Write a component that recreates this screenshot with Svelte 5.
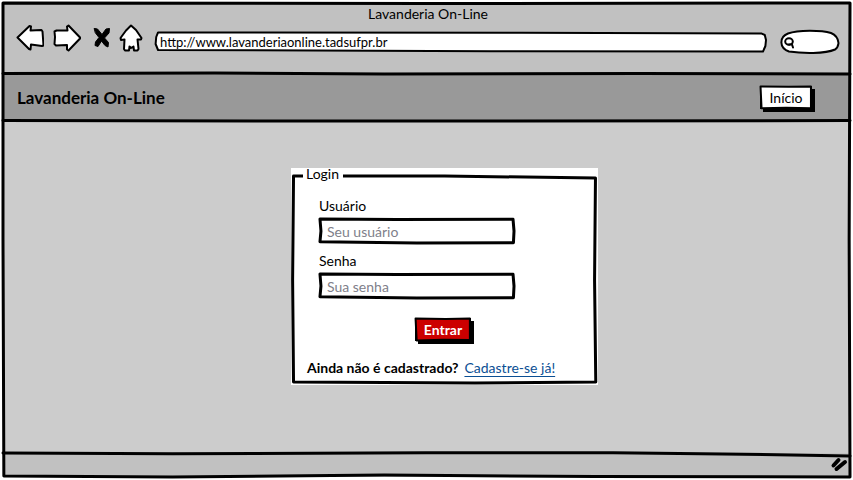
<script>
  let address = $state('http://www.lavanderiaonline.tadsufpr.br');
  let search = $state('');
  let user = $state('');
  let password = $state('');
</script>

{#snippet rough(d, fill = 'none')}
  <svg class="rough" viewBox="0 0 100 100" preserveAspectRatio="none" aria-hidden="true">
    <path {d} {fill} />
  </svg>
{/snippet}

<div class="window">
  <div class="toolbar">
    <div class="title">Lavanderia On-Line</div>
    <div class="controls">
      <button class="icon" aria-label="Voltar">
        <svg width="28" height="28" viewBox="0 0 28 28"><path d="M1.500 13.500 L13.500 2 L15 2.500 L14.500 6.500 L25.500 6 L26.500 7.500 L27.500 21.500 L26 22 L15 20.500 L14.500 25.500 L13 25 Z" /></svg>
      </button>
      <button class="icon forward" aria-label="Avançar">
        <svg width="28" height="28" viewBox="0 0 28 28"><path d="M1.500 7.500 L3.500 6.500 L14.500 6.500 L14 2.500 L15.500 1.500 L27.500 14 L15.500 26.500 L14 25.500 L14 21 L3 21.500 L1.500 20 L2 13 Z" /></svg>
      </button>
      <button class="icon stop" aria-label="Parar">
        <svg width="18" height="22" viewBox="0 0 18 22"><path class="solid" d="M1.500 1.500 L4.500 2 L9 7.500 L13 2 L16.500 1.500 L16 6 L11.500 11 L15.500 15.500 L15 20 L12 18.500 L8.500 14 L5 19.500 L2 18.500 L2.500 15 L6 10.500 L2.500 6 Z" /></svg>
      </button>
      <button class="icon home" aria-label="Página inicial">
        <svg width="24" height="28" viewBox="0 0 24 28"><path d="M12 1.500 L17 6 L22.500 14 L22 15.500 L18.500 15.500 L19.500 25 L18.500 26.500 L15 26.500 L14.500 22.500 L12 24 L10.500 22.500 L10 26.500 L6 26.500 L5 25 L5.500 15.500 L2 16 L1.500 14 L7 6.500 Z" /></svg>
      </button>
      <div class="address">
        {@render rough('M0.500 2 L0.200 25 L0.100 60 L0.500 90 L55 96 L99.500 98 L99.900 70 L100 40 L99.800 15 L99.300 8 L60 4 Z', '#fff')}
        <input type="text" aria-label="Endereço" bind:value={address} />
      </div>
      <div class="search">
        <svg width="60" height="26" viewBox="0 0 60 26" aria-hidden="true">
          <path d="M8 4.500 C18 0.500 42 1 51 4 C56 6 58 9 58.500 14 C58 17 58 19 55 20.500 C45 25 22 24.500 9 22.500 C-1 19 -1 8 8 4.500 Z" />
          <ellipse cx="9" cy="12.500" rx="3.800" ry="3.200" />
          <path d="M9 15.500 L12 15.500 L13 18.500" />
        </svg>
        <input type="search" aria-label="Pesquisar" bind:value={search} />
      </div>
    </div>
  </div>

  <header>
    {@render rough('M0 1 L25 0 L45 2 L75 1 L100 2')}
    <h1>Lavanderia On-Line</h1>
    <button class="sketch">
      {@render rough('M1 2 L55 3 L98 2 L98 97 L50 95 L3 97 Z', '#fff')}
      <span>Início</span>
    </button>
    {@render rough('M0 97 L30 98 L60 98 L100 97')}
  </header>

  <main>
    <form onsubmit={(e) => e.preventDefault()}>
      <div class="outline">
        {@render rough('M0.500 0 L50 0 L99.500 1 L99.200 50 L99.600 99 L60 99.500 L0.500 99 L0.200 50 Z')}
      </div>
      <fieldset>
        <legend>Login</legend>
        <div class="fields">
          <label for="user">Usuário</label>
          <div class="field">
            {@render rough('M0.500 4 L40 6 L99 5 L99.500 50 L99.200 95 L50 96 L0.500 91 L1 50 Z', '#fff')}
            <input id="user" type="text" placeholder="Seu usuário" bind:value={user} />
          </div>
          <label for="password">Senha</label>
          <div class="field">
            {@render rough('M0.500 4 L40 6 L99 5 L99.500 50 L99.200 95 L50 96 L0.500 91 L1 50 Z', '#fff')}
            <input id="password" type="password" placeholder="Sua senha" bind:value={password} />
          </div>
        </div>
        <button class="sketch enter">
          {@render rough('M1 2 L55 4 L98 2 L98 96 L50 95 L3 98 Z', '#c00')}
          <span>Entrar</span>
        </button>
        <p><strong>Ainda não é cadastrado?</strong><a href="#cadastro">Cadastre-se já!</a></p>
      </fieldset>
    </form>
  </main>

  <footer>
    {@render rough('M0 0 L20 3 L50 -1 L72 -1 L85 4 L100 12')}
    <svg width="18" height="16" viewBox="0 0 18 16" aria-hidden="true">
      <path class="grip" d="M3.500 8.500 L8.500 3 M6.500 12 L15 5" />
    </svg>
  </footer>
  <svg class="rough frame" viewBox="0 0 100 100" preserveAspectRatio="none" aria-hidden="true">
    <path d="M0 0 L50 0.100 L100 0 L99.900 50 L100 100 L70 99.900 L45 99.600 L20 100 L0.100 99.800 L0 50 Z" fill="none" />
  </svg>
</div>

<style>
  :global(body) {
    margin: 0;
    background: #fff;
  }

  .window {
    position: relative;
    display: flex;
    flex-direction: column;
    box-sizing: border-box;
    min-height: 100vh;
    padding: 3px;
    font-family: Lato, "Liberation Sans", sans-serif;
    font-size: 14px;
    line-height: 16px;
    color: #000;
  }

  input,
  button {
    box-sizing: border-box;
    border: 0;
    padding: 0;
    background: none;
    font: inherit;
    color: inherit;
  }

  svg {
    display: block;
  }

  path,
  ellipse {
    stroke: #000;
    stroke-width: 3;
    stroke-linejoin: round;
    stroke-linecap: round;
  }

  .rough {
    position: absolute;
    inset: 0;
    width: 100%;
    height: 100%;
    overflow: visible;
    pointer-events: none;
  }

  .rough path {
    vector-effect: non-scaling-stroke;
  }

  .frame {
    inset: 3px;
    width: calc(100% - 6px);
    height: calc(100% - 6px);
  }

  .toolbar {
    padding: 3px 10px 19px 13px;
    background: #c1c1c1;
  }

  .title {
    text-align: center;
  }

  .controls {
    display: flex;
    align-items: center;
    height: 32px;
  }

  .icon {
    flex: none;
  }

  .icon path {
    fill: #fff;
    stroke-width: 2;
  }

  .icon .solid {
    fill: #000;
    stroke-width: 1;
  }

  .forward {
    margin-left: 9px;
  }

  .stop {
    margin-left: 12px;
  }

  .home {
    margin-left: 8px;
  }

  .address {
    position: relative;
    flex: 1;
    height: 20px;
    margin: 8px 14px 0 12px;
  }

  .address path,
  .search path,
  .search ellipse {
    stroke-width: 2;
  }

  .search path,
  .search ellipse {
    fill: #fff;
  }

  .address input {
    position: relative;
    display: block;
    width: 100%;
    height: 20px;
    padding: 0 5px;
    font-size: 13px;
  }

  .search {
    position: relative;
    flex: none;
    margin-top: 8px;
  }

  .search input {
    position: absolute;
    inset: 4px 6px 4px 18px;
    width: 36px;
  }

  header {
    position: relative;
    display: flex;
    align-items: center;
    justify-content: space-between;
    box-sizing: border-box;
    height: 49px;
    padding: 0 38px 0 14px;
    background: #999;
  }

  h1 {
    margin: 0;
    font-size: 17px;
    line-height: 20px;
  }

  .sketch {
    position: relative;
    width: 52px;
    height: 23px;
    background: #000;
    box-shadow: 3px 3px #000;
  }

  .sketch path {
    stroke-width: 2;
  }

  .sketch span {
    position: relative;
  }

  main {
    display: flex;
    flex: 1;
    align-items: center;
    justify-content: center;
    padding: 24px 24px 46px 60px;
    background: #ccc;
  }

  form {
    position: relative;
    width: 307px;
    max-width: 100%;
    background: #fff;
  }

  .outline {
    position: absolute;
    inset: 8px 1px 1px;
  }

  fieldset {
    position: relative;
    min-width: 0;
    margin: 0;
    border: 0;
    padding: 0;
  }

  legend {
    margin-left: 12px;
    padding: 0 4px 0 3px;
    background: #fff;
    line-height: 12px;
  }

  .fields {
    display: flex;
    flex-direction: column;
    width: 196px;
    padding: 18px 28px 0;
  }

  .field {
    position: relative;
    margin: 4px 0 9px;
  }

  .field input {
    position: relative;
    display: block;
    width: 100%;
    height: 26px;
    padding: 0 8px;
  }

  .field input::placeholder {
    color: #80808a;
    opacity: 1;
  }

  .enter {
    display: block;
    width: 56px;
    margin: 10px 0 0 124px;
    font-weight: bold;
    color: #fff;
  }

  p {
    display: flex;
    gap: 6px;
    margin: 0;
    padding: 19px 16px 9px;
  }

  a {
    color: #0b4f94;
    text-underline-offset: 3px;
  }

  footer {
    position: relative;
    display: flex;
    align-items: center;
    justify-content: flex-end;
    box-sizing: border-box;
    height: 24px;
    padding-right: 2px;
    background: #c1c1c1;
  }

  footer .grip {
    fill: none;
    stroke-width: 4;
  }
</style>
